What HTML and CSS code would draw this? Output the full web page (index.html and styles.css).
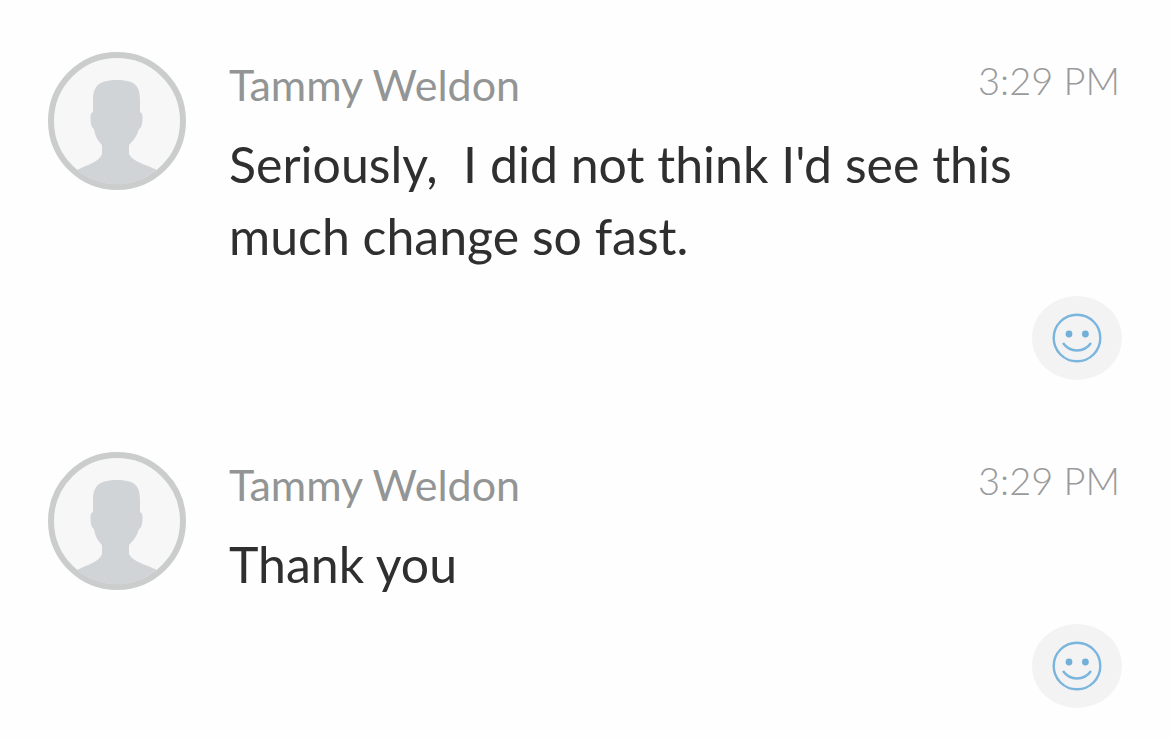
FILE: index.html
```
<!DOCTYPE html>
<html lang="en">
<head>
    <meta charset="UTF-8">
    <meta name="viewport" content="width=device-width, initial-scale=1.0">
    <title>Messages</title>
    <link rel="stylesheet" href="styles.css">
</head>
<body>
    <svg class="sprite" aria-hidden="true">
        <symbol id="avatar" viewBox="0 0 138 138">
            <circle cx="69" cy="69" r="66" fill="#f7f7f7"/>
            <circle cx="69" cy="69" r="66" fill="none" stroke="#cbcccc" stroke-width="6"/>
            <path fill="#d1d4d7" d="M45 60 V48 C45 34 51 28 69 28 C87 28 92 34 92 48 V60 C95 61 95 66 94 72 C93 75 93 76 91 77 C89 84 85 89 81 93 V102 C85 110 97 112 109 118 A63 63 0 0 1 29 118 C41 112 51 110 54 102 V93 C50 89 47 84 46 77 C44 76 44 75 43 72 C42 66 42 61 45 60 Z"/>
        </symbol>
        <symbol id="smiley" viewBox="0 0 50 50">
            <circle cx="25" cy="25" r="23.3" fill="none" stroke="#7ab5de" stroke-width="2.4"/>
            <circle cx="17" cy="21" r="3.4" fill="#72afd9"/>
            <circle cx="33.4" cy="21" r="3.4" fill="#72afd9"/>
            <path d="M11 30 C18 40 32 40 39 30" fill="none" stroke="#7ab5de" stroke-width="2.4"/>
        </symbol>
    </svg>

    <main class="messages">
        <article class="message">
            <svg class="avatar" aria-hidden="true"><use href="#avatar"/></svg>
            <div class="message-content">
                <header class="message-header">
                    <h2 class="message-name">Tammy Weldon</h2>
                    <time class="message-time" datetime="15:29">3:29 PM</time>
                </header>
                <p class="message-text">Seriously,  I did not think I'd see this much change so fast.</p>
                <button class="react-button" type="button" aria-label="Add reaction">
                    <svg class="smiley" aria-hidden="true"><use href="#smiley"/></svg>
                </button>
            </div>
        </article>

        <article class="message">
            <svg class="avatar" aria-hidden="true"><use href="#avatar"/></svg>
            <div class="message-content">
                <header class="message-header">
                    <h2 class="message-name">Tammy Weldon</h2>
                    <time class="message-time" datetime="15:29">3:29 PM</time>
                </header>
                <p class="message-text">Thank you</p>
                <button class="react-button" type="button" aria-label="Add reaction">
                    <svg class="smiley" aria-hidden="true"><use href="#smiley"/></svg>
                </button>
            </div>
        </article>
    </main>
</body>
</html>
```
FILE: styles.css
```
* {
    box-sizing: border-box;
}

body {
    margin: 0;
    font-family: Lato, sans-serif;
    background-color: #fefefe;
    color: #2f2f30;
}

.sprite {
    display: none;
}

.messages {
    display: flex;
    flex-direction: column;
    gap: 72px;
    padding: 52px 48px 30px;
}

.message {
    display: flex;
    align-items: flex-start;
    gap: 43px;
}

.avatar {
    flex: none;
    width: 138px;
    height: 138px;
}

.message-content {
    flex: 1;
    display: flex;
    flex-direction: column;
    min-width: 0;
}

.message-header {
    display: flex;
    justify-content: space-between;
    align-items: flex-start;
    margin-bottom: 10px;
    padding-right: 2px;
}

.message-name {
    margin: 0;
    font-size: 43px;
    font-weight: 400;
    line-height: 66px;
    color: #939595;
}

.message-time {
    font-size: 38px;
    font-weight: 300;
    line-height: 56px;
    color: #999a9b;
}

.message-text {
    margin: 0 0 24px;
    font-size: 50px;
    line-height: 72px;
    white-space: pre-wrap; /* Keep the spacing as typed */
}

.react-button {
    align-self: flex-end;
    display: flex;
    justify-content: center;
    align-items: center;
    width: 90px;
    height: 84px;
    padding: 0;
    border: none;
    border-radius: 50%;
    background-color: #f3f3f3;
    cursor: pointer;
}

.smiley {
    width: 50px;
    height: 50px;
}
```
